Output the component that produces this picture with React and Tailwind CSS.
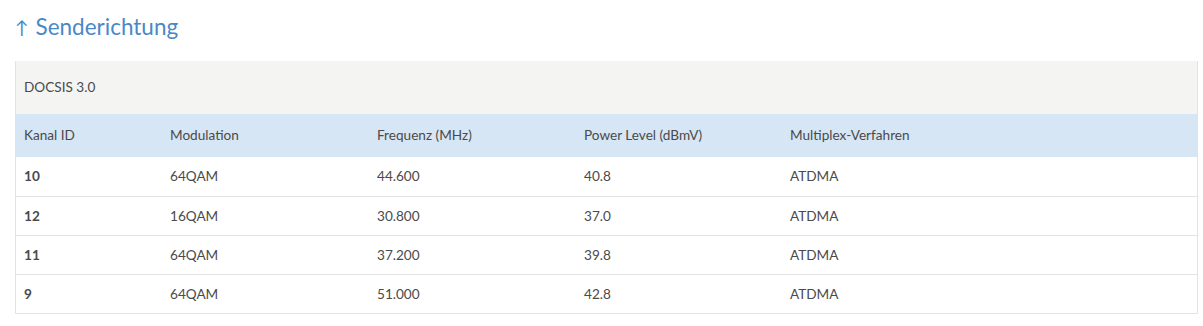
import React from "react";

const rows = [
  ["10", "64QAM", "44.600", "40.8", "ATDMA"],
  ["12", "16QAM", "30.800", "37.0", "ATDMA"],
  ["11", "64QAM", "37.200", "39.8", "ATDMA"],
  ["9", "64QAM", "51.000", "42.8", "ATDMA"],
];

const cols = "grid grid-cols-[145px_207px_207px_206px_1fr]";

export default function App() {
  return (
    <div className="bg-white w-[1203px] h-[326px] pl-[15px] pr-[5px] pt-[12px]" style={{ fontFamily: "Lato, 'Open Sans', sans-serif" }}>
      <h2 className="flex items-center h-[30px] text-[22.5px] text-[#4a88c8] leading-none">
        <span className="text-[18px] mr-[7px]">↑</span>
        <span>Senderichtung</span>
      </h2>
      <div className="mt-[19px] border-l border-r border-b border-[#e3e3e3] text-[13.6px] text-[#4a4a4a]">
        <div className="h-[53px] bg-[#f4f4f3] flex items-center pl-[8px]">DOCSIS 3.0</div>
        <div className={`${cols} h-[43px] bg-[#d6e6f5] items-center`}>
          <div className="pl-[8px]">Kanal ID</div>
          <div className="pl-[9px]">Modulation</div>
          <div className="pl-[9px]">Frequenz (MHz)</div>
          <div className="pl-[9px]">Power Level (dBmV)</div>
          <div className="pl-[9px]">Multiplex-Verfahren</div>
        </div>
        {rows.map((r, i) => (
          <div key={i} className={`${cols} h-[39px] items-center ${i > 0 ? "border-t border-[#e3e3e3]" : ""}`}>
            <div className="pl-[8px] font-bold">{r[0]}</div>
            <div className="pl-[9px]">{r[1]}</div>
            <div className="pl-[9px]">{r[2]}</div>
            <div className="pl-[9px]">{r[3]}</div>
            <div className="pl-[9px]">{r[4]}</div>
          </div>
        ))}
      </div>
    </div>
  );
}
